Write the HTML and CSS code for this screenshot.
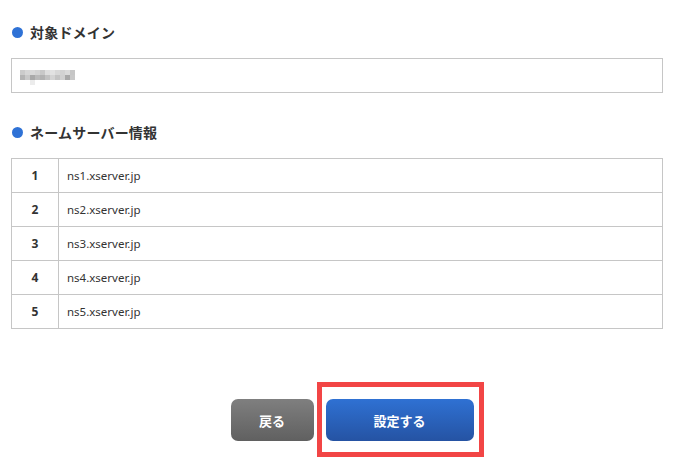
FILE: index.html
```html
<!DOCTYPE html>
<html lang="ja">
<head>
<meta charset="utf-8">
<title>ネームサーバー設定</title>
<link rel="stylesheet" href="styles.css">
</head>
<body>
<main class="page">
  <section class="section first">
    <h2 class="heading"><span class="dot"></span>対象ドメイン</h2>
    <div class="domain-box">
      <div class="blur">
        <div class="blur-row">
          <i style="background:#cbcbcb"></i><i style="background:#d6d6d6"></i><i style="background:#d9d9d9"></i><i style="background:#d3d3d3"></i><i style="background:#c8c8c8"></i><i style="background:#dedede"></i><i style="background:#e2e2e2"></i><i style="background:#d8d8d8"></i><i style="background:#d2d2d2"></i><i style="background:#dadada"></i><i style="background:#c6c6c6"></i>
        </div>
        <div class="blur-row">
          <i style="background:#b4b4b4"></i><i style="background:#c9c9c9"></i><i style="background:#a9a9a9"></i><i style="background:#bababa"></i><i style="background:#b2b2b2"></i><i style="background:#c2c2c2"></i><i style="background:#d4d4d4"></i><i style="background:#c4c4c4"></i><i style="background:#d0d0d0"></i><i style="background:#a8a8a8"></i><i style="background:#c8c8c8"></i>
        </div>
        <div class="blur-row">
          <i style="background:transparent"></i><i style="background:transparent"></i><i style="background:#ececec"></i>
        </div>
      </div>
    </div>
  </section>

  <section class="section second">
    <h2 class="heading"><span class="dot"></span>ネームサーバー情報</h2>
    <table class="ns-table">
      <tr><th>1</th><td>ns1.xserver.jp</td></tr>
      <tr><th>2</th><td>ns2.xserver.jp</td></tr>
      <tr><th>3</th><td>ns3.xserver.jp</td></tr>
      <tr><th>4</th><td>ns4.xserver.jp</td></tr>
      <tr><th>5</th><td>ns5.xserver.jp</td></tr>
    </table>
  </section>

  <div class="actions">
    <button class="btn btn-back">戻る</button>
    <div class="highlight-wrap">
      <button class="btn btn-submit">設定する</button>
      <div class="highlight"></div>
    </div>
  </div>
</main>
</body>
</html>
```

FILE: styles.css
```css
* { box-sizing: border-box; }
html, body { margin: 0; padding: 0; background: #fff; }
body {
  font-family: "Noto Sans", "Noto Sans CJK JP", sans-serif;
  color: #333;
}
.page {
  padding: 0 19px 24px 11px;
  width: 682px;
  min-height: 465px;
}
.section.first { padding-top: 22px; }
.section.second { padding-top: 29px; }
.heading {
  display: flex;
  align-items: center;
  gap: 7px;
  margin: 0 0 16px 0;
  height: 20px;
  font-family: "Noto Sans CJK JP", sans-serif;
  font-size: 14px;
  font-weight: 700;
  color: #333;
  letter-spacing: 0.2px;
}
.dot {
  width: 11px;
  height: 11px;
  border-radius: 50%;
  background: #2f72d6;
  margin-left: 1px;
}
.domain-box {
  height: 35px;
  border: 1px solid #c6c6c6;
  padding: 11px 0 0 8px;
}
.blur { display: flex; flex-direction: column; }
.blur-row { display: flex; height: 5px; }
.blur-row i { display: block; width: 5px; height: 5px; }
.ns-table {
  width: 100%;
  border-collapse: collapse;
  font-size: 11px;
}
.ns-table th, .ns-table td {
  border: 1px solid #c6c6c6;
  height: 34px;
  padding: 0;
  vertical-align: middle;
}
.ns-table th {
  width: 47px;
  text-align: center;
  font-weight: 700;
  font-size: 12px;
  color: #333;
}
.ns-table td {
  padding-left: 8px;
  font-family: "Noto Sans", sans-serif;
  font-size: 11.5px;
  color: #333;
}
.actions {
  display: flex;
  justify-content: center;
  align-items: flex-start;
  gap: 12px;
  padding-left: 30px;
  margin-top: 70px;
}
.btn {
  border: 0;
  height: 42px;
  border-radius: 7px;
  color: #fff;
  font-family: "Noto Sans CJK JP", sans-serif;
  font-weight: 700;
  font-size: 13px;
  padding: 0;
  cursor: pointer;
}
.btn-back {
  width: 83px;
  background: linear-gradient(#7f7f7f, #606060);
}
.btn-submit {
  width: 148px;
  background: linear-gradient(#2f71d3, #2553a3);
  display: block;
}
.highlight-wrap { position: relative; height: 42px; }
.highlight {
  position: absolute;
  left: -9px;
  top: -17px;
  width: 167px;
  height: 75px;
  border: 5px solid #f24545;
  pointer-events: none;
}
```
